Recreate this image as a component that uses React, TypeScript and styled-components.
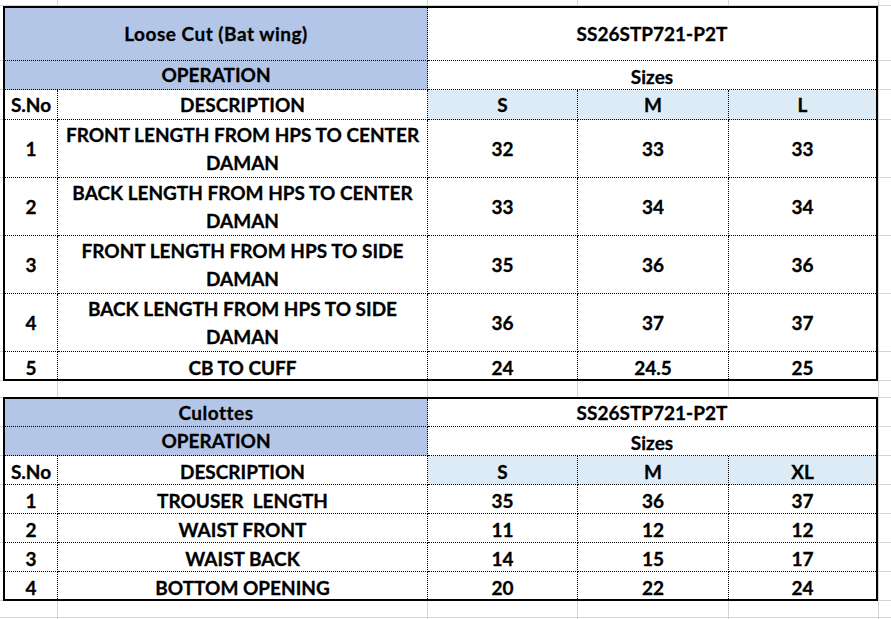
import React from "react";
import styled, { createGlobalStyle } from "styled-components";

const GRID = "#d4d4d4";
const V_LINES = [57, 427, 577, 728, 878];
const H_LINES = [5, 60, 89, 119, 177, 235, 293, 351, 380, 397, 426, 455, 484, 513, 542, 571, 600, 617];

const gridImage = [
  ...V_LINES.map(
    (x) => `linear-gradient(to right, transparent ${x}px, ${GRID} ${x}px, ${GRID} ${x + 1}px, transparent ${x + 1}px)`
  ),
  ...H_LINES.map(
    (y) => `linear-gradient(to bottom, transparent ${y}px, ${GRID} ${y}px, ${GRID} ${y + 1}px, transparent ${y + 1}px)`
  ),
].join(", ");

const Global = createGlobalStyle`
  html, body { margin: 0; padding: 0; background: #fff; }
  body { font-family: Lato, "Open Sans", "Liberation Sans", sans-serif; }
`;

const Sheet = styled.div`
  width: 891px;
  height: 619px;
  box-sizing: border-box;
  padding: 6px 0 0 3px;
  background-color: #fff;
  background-image: ${gridImage};
  display: flex;
  flex-direction: column;
  gap: 16px;
  overflow: hidden;
`;

const Table = styled.div<{ $rows: string }>`
  display: grid;
  grid-template-columns: 53px 370px 150px 151px 147px;
  grid-template-rows: ${(p) => p.$rows};
  width: 875px;
  box-sizing: border-box;
  border: 2px solid #000;
  background: #fff;
`;

type Fill = "blue" | "light" | "none";

const Cell = styled.div<{
  $span?: number;
  $fill?: Fill;
  $noRight?: boolean;
  $noBottom?: boolean;
  $low?: boolean;
  $title?: boolean;
}>`
  grid-column: span ${(p) => p.$span ?? 1};
  box-sizing: border-box;
  display: flex;
  align-items: center;
  justify-content: center;
  text-align: center;
  white-space: pre-wrap;
  padding-top: ${(p) => (p.$low ? "4px" : "0")};
  font-family: Lato, "Open Sans", "Liberation Sans", sans-serif;
  font-weight: 700;
  font-size: 19px;
  line-height: 28px;
  letter-spacing: ${(p) => (p.$title ? "0.5px" : "0")};
  color: #000;
  -webkit-text-stroke: 0.3px #000;
  background: ${(p) => (p.$fill === "blue" ? "#b4c6e7" : p.$fill === "light" ? "#ddebf7" : "#fff")};
  border-right: ${(p) => (p.$noRight ? "none" : "1px dotted #000")};
  border-bottom: ${(p) => (p.$noBottom ? "none" : "1px dotted #000")};
`;

type Row = { no: string; desc: string; vals: string[]; low?: boolean };
type Spec = {
  title: string;
  code: string;
  sizes: string[];
  rows: Row[];
  template: string;
  lowHeader?: boolean;
};

const tables: Spec[] = [
  {
    title: "Loose Cut (Bat wing)",
    code: "SS26STP721-P2T",
    sizes: ["S", "M", "L"],
    template: "53px 29px 30px 58px 58px 58px 58px 27px",
    rows: [
      { no: "1", desc: "FRONT LENGTH FROM HPS TO CENTER\nDAMAN", vals: ["32", "33", "33"] },
      { no: "2", desc: "BACK LENGTH FROM HPS TO CENTER\nDAMAN", vals: ["33", "34", "34"] },
      { no: "3", desc: "FRONT LENGTH FROM HPS TO SIDE\nDAMAN", vals: ["35", "36", "36"] },
      { no: "4", desc: "BACK LENGTH FROM HPS TO SIDE\nDAMAN", vals: ["36", "37", "37"] },
      { no: "5", desc: "CB TO CUFF", vals: ["24", "24.5", "25"], low: true },
    ],
  },
  {
    title: "Culottes",
    code: "SS26STP721-P2T",
    sizes: ["S", "M", "XL"],
    template: "28px 29px 29px 29px 29px 29px 27px",
    lowHeader: true,
    rows: [
      { no: "1", desc: "TROUSER  LENGTH", vals: ["35", "36", "37"], low: true },
      { no: "2", desc: "WAIST FRONT", vals: ["11", "12", "12"], low: true },
      { no: "3", desc: "WAIST BACK", vals: ["14", "15", "17"], low: true },
      { no: "4", desc: "BOTTOM OPENING", vals: ["20", "22", "24"], low: true },
    ],
  },
];

function SpecTable({ spec }: { spec: Spec }) {
  const last = spec.rows.length - 1;
  const lh = spec.lowHeader;
  return (
    <Table $rows={spec.template}>
      <Cell $span={2} $fill="blue" $title>{spec.title}</Cell>
      <Cell $span={3} $noRight>{spec.code}</Cell>
      <Cell $span={2} $fill="blue">OPERATION</Cell>
      <Cell $span={3} $noRight $low>Sizes</Cell>
      <Cell $low={lh}>S.No</Cell>
      <Cell $low={lh}>DESCRIPTION</Cell>
      {spec.sizes.map((s, i) => (
        <Cell key={s} $fill="light" $noRight={i === 2} $low={lh}>{s}</Cell>
      ))}
      {spec.rows.map((r, ri) => (
        <React.Fragment key={r.no}>
          <Cell $noBottom={ri === last} $low={r.low}>{r.no}</Cell>
          <Cell $noBottom={ri === last} $low={r.low}>{r.desc}</Cell>
          {r.vals.map((v, i) => (
            <Cell key={i} $noBottom={ri === last} $noRight={i === 2} $low={r.low}>{v}</Cell>
          ))}
        </React.Fragment>
      ))}
    </Table>
  );
}

export default function App() {
  return (
    <>
      <Global />
      <Sheet>
        {tables.map((t) => (
          <SpecTable key={t.title} spec={t} />
        ))}
      </Sheet>
    </>
  );
}
